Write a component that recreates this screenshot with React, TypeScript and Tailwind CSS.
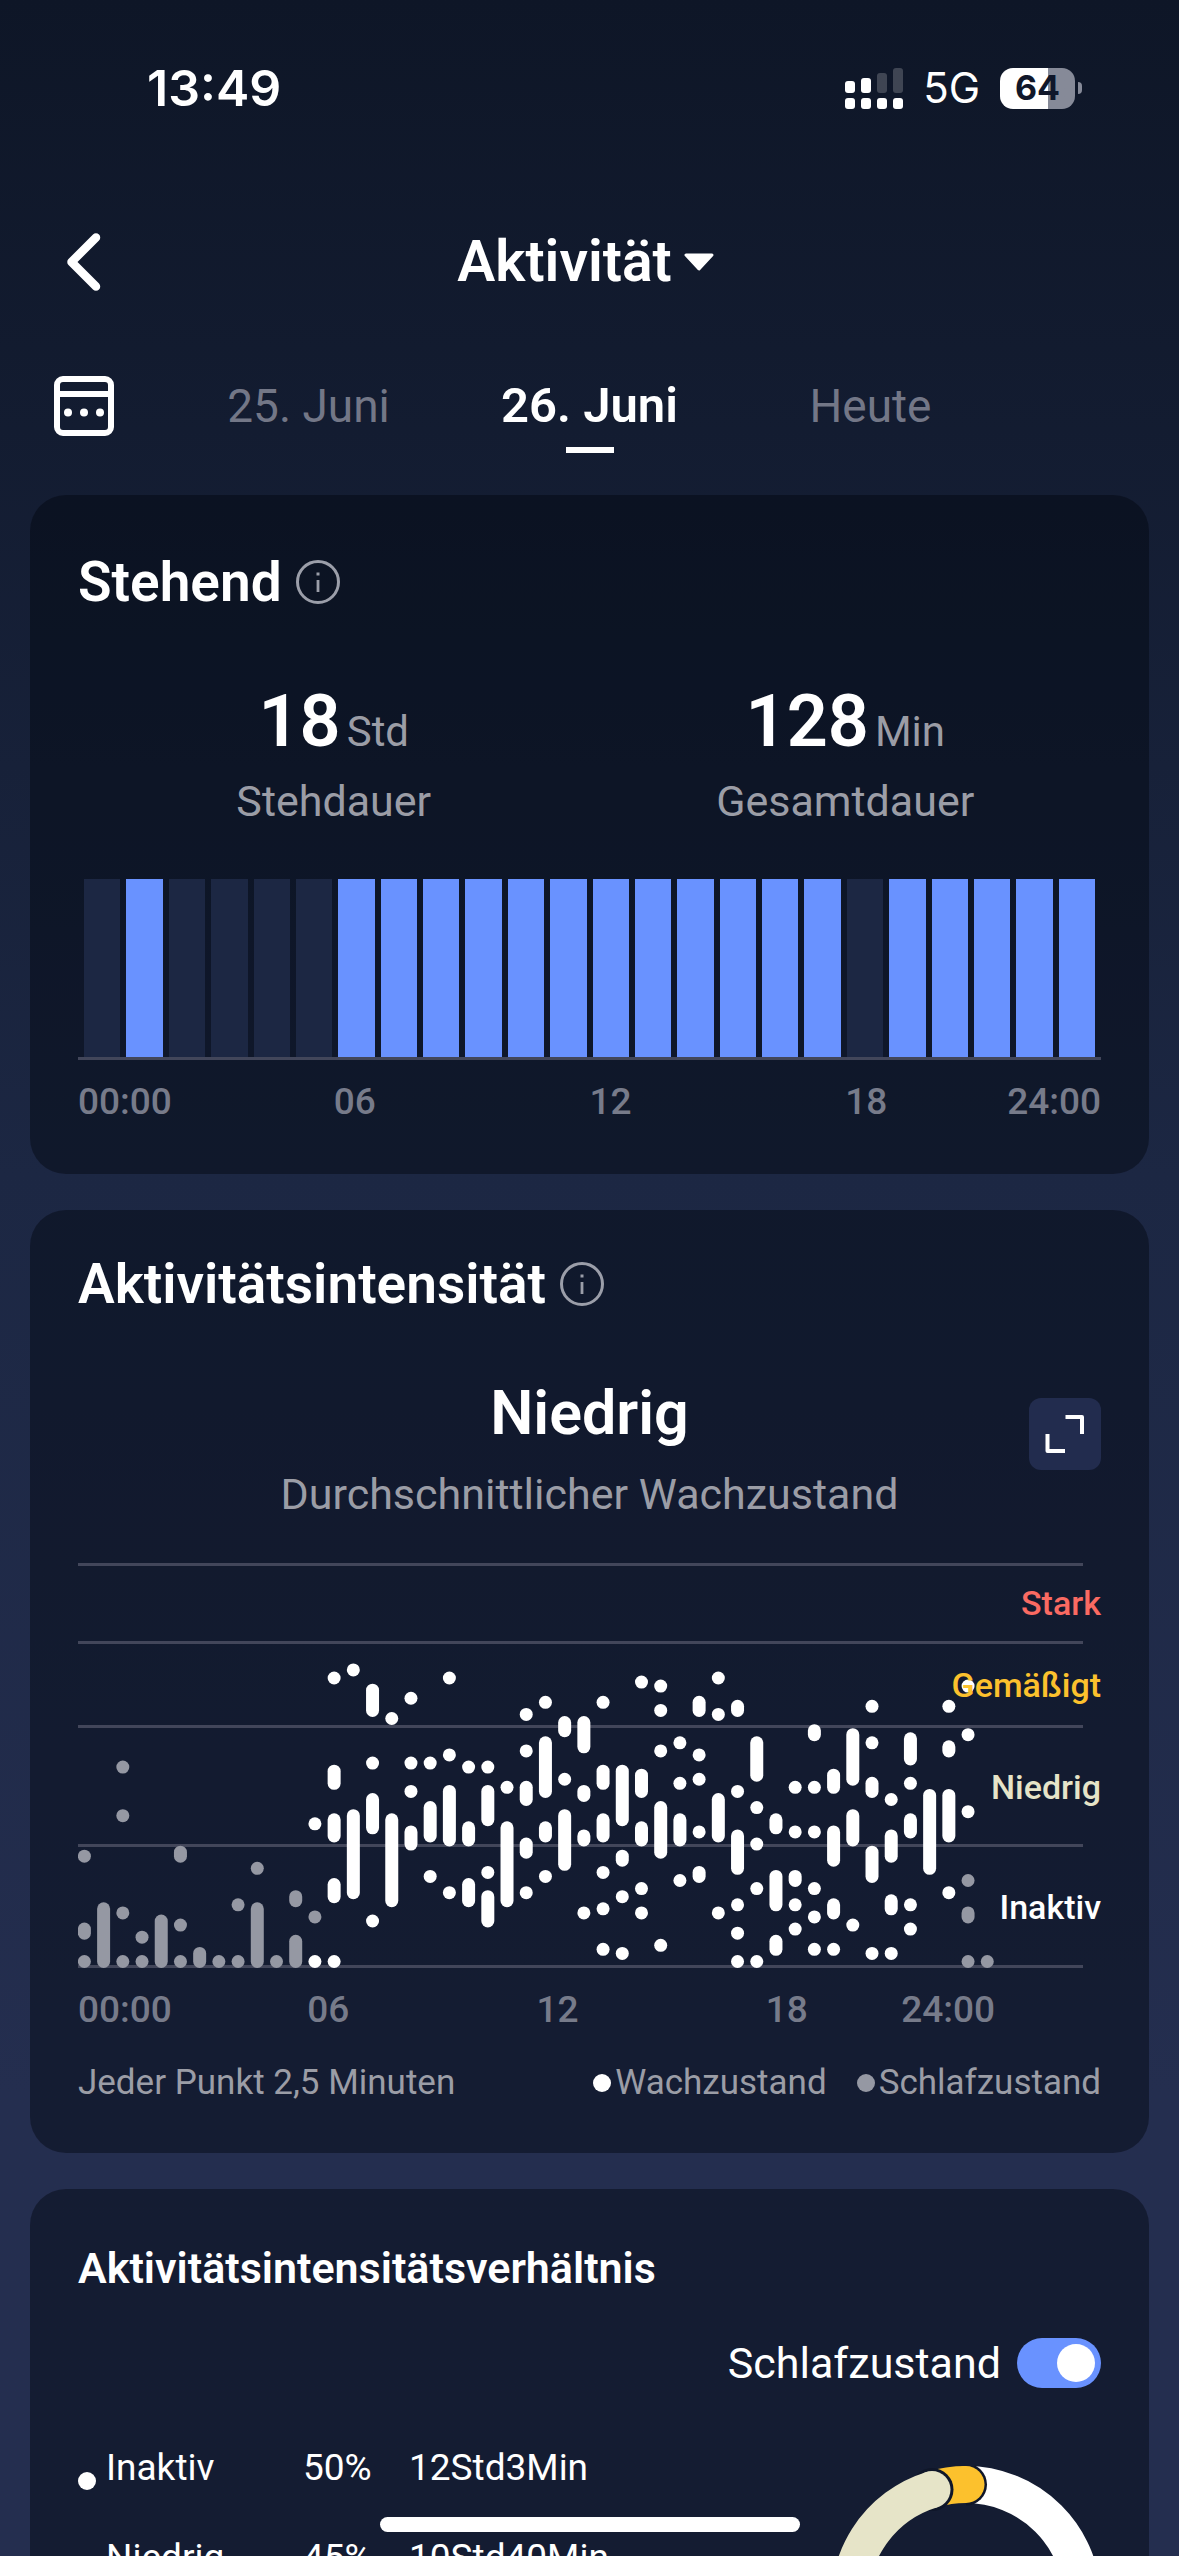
import React, { useState } from 'react';
import clsx from 'clsx';

// One run of stacked points: [column, lowest level, highest level]
type Run = [number, number, number];

const STANDING = [0, 1, 0, 0, 0, 0, 1, 1, 1, 1, 1, 1, 1, 1, 1, 1, 1, 1, 0, 1, 1, 1, 1, 1];

const SLEEP: Run[] = [
    [0, 26, 26], [0, 7, 8], [0, 0, 0],
    [1, 0, 13],
    [2, 48, 48], [2, 36, 36], [2, 12, 12], [2, 0, 0],
    [3, 6, 6], [3, 0, 0],
    [4, 0, 10],
    [5, 26, 27], [5, 9, 9], [5, 0, 0],
    [6, 0, 2],
    [7, 0, 0],
    [8, 14, 14], [8, 0, 0],
    [9, 23, 23], [9, 0, 13],
    [10, 0, 0],
    [11, 15, 16], [11, 0, 5],
    [12, 11, 11],
    [46, 20, 20], [46, 11, 12], [46, 0, 0],
    [47, 0, 0],
];

const AWAKE: Run[] = [
    [12, 34, 34], [12, 0, 0],
    [13, 70, 70], [13, 44, 47], [13, 31, 35], [13, 16, 19], [13, 0, 0],
    [14, 72, 72], [14, 17, 36],
    [15, 62, 67], [15, 49, 49], [15, 33, 40], [15, 10, 10],
    [16, 60, 60], [16, 15, 35],
    [17, 65, 65], [17, 49, 49], [17, 42, 42], [17, 29, 32],
    [18, 49, 49], [18, 31, 38], [18, 21, 21],
    [19, 70, 70], [19, 51, 51], [19, 30, 42], [19, 17, 17],
    [20, 48, 48], [20, 30, 33], [20, 15, 19],
    [21, 48, 48], [21, 35, 42], [21, 22, 22], [21, 10, 16],
    [22, 43, 43], [22, 15, 33],
    [23, 61, 61], [23, 52, 52], [23, 40, 43], [23, 27, 29], [23, 17, 17],
    [24, 64, 64], [24, 42, 54], [24, 31, 33], [24, 21, 21],
    [25, 57, 59], [25, 45, 45], [25, 24, 36],
    [26, 53, 59], [26, 41, 42], [26, 30, 31], [26, 12, 12],
    [27, 64, 64], [27, 44, 47], [27, 31, 35], [27, 22, 22], [27, 13, 13], [27, 3, 3],
    [28, 35, 47], [28, 25, 26], [28, 16, 16], [28, 2, 2],
    [29, 69, 69], [29, 42, 46], [29, 30, 33], [29, 18, 18], [29, 12, 12],
    [30, 68, 68], [30, 62, 62], [30, 52, 52], [30, 27, 38], [30, 4, 4],
    [31, 54, 54], [31, 44, 44], [31, 30, 35], [31, 20, 20],
    [32, 62, 64], [32, 51, 51], [32, 45, 45], [32, 32, 32], [32, 21, 22],
    [33, 70, 70], [33, 61, 61], [33, 31, 40], [33, 12, 12],
    [34, 62, 63], [34, 42, 42], [34, 23, 31], [34, 14, 14], [34, 7, 7], [34, 0, 0],
    [35, 46, 54], [35, 38, 38], [35, 29, 29], [35, 18, 18], [35, 0, 0],
    [36, 33, 35], [36, 14, 21], [36, 3, 5],
    [37, 43, 43], [37, 32, 32], [37, 20, 21], [37, 14, 14], [37, 8, 8],
    [38, 56, 57], [38, 43, 43], [38, 32, 32], [38, 18, 18], [38, 11, 11], [38, 3, 3],
    [39, 43, 46], [39, 25, 32], [39, 12, 14], [39, 3, 3],
    [40, 45, 56], [40, 30, 36], [40, 9, 9],
    [41, 63, 63], [41, 54, 54], [41, 42, 44], [41, 21, 27], [41, 2, 2],
    [42, 40, 40], [42, 26, 31], [42, 13, 15], [42, 2, 2],
    [43, 50, 55], [43, 44, 44], [43, 32, 35], [43, 14, 14], [43, 8, 8],
    [44, 23, 41],
    [45, 63, 63], [45, 52, 53], [45, 31, 41], [45, 17, 17],
    [46, 68, 68], [46, 56, 56], [46, 37, 37],
];

const DAYS = ['25. Juni', '26. Juni', 'Heute'];

const RATIO = [
    { label: 'Inaktiv', share: '50%', time: '12Std3Min', dot: 'bg-white' },
    { label: 'Niedrig', share: '45%', time: '10Std40Min', dot: 'bg-[#e6e4c8]' },
];

const StatusBar = () => (
    <div className="flex h-44 shrink-0 items-center justify-between pl-[147px] pr-[97px] font-[Inter]">
        <span className="text-[50px] leading-none font-semibold">13:49</span>
        <div className="flex items-center gap-5">
            <svg width="58" height="41" viewBox="0 0 58 41" fill="#fff" aria-hidden="true">
                <rect x="0" y="13" width="10" height="12" rx="3" />
                <rect x="16" y="10" width="10" height="15" rx="3" />
                <rect x="32" y="5" width="10" height="20" rx="3" opacity=".2" />
                <rect x="48" y="0" width="10" height="25" rx="3" opacity=".2" />
                <rect x="0" y="30" width="10" height="11" rx="3" />
                <rect x="16" y="30" width="10" height="11" rx="3" />
                <rect x="32" y="30" width="10" height="11" rx="3" />
                <rect x="48" y="30" width="10" height="11" rx="3" />
            </svg>
            <span className="text-[42px] leading-none">5G</span>
            <div className="flex items-center gap-[3px]">
                <div className="flex h-[41px] w-[75px] items-center justify-center rounded-[13px] bg-linear-to-r from-white from-64% to-[#868a98] to-64% text-[34px] leading-none font-bold text-[#10172a]">
                    64
                </div>
                <div className="h-3 w-1 rounded-r-full bg-[#868a98]" />
            </div>
        </div>
    </div>
);

const InfoButton = ({ topic }: { topic: string }) => (
    <button type="button" aria-label={`Info ${topic}`}>
        <svg width="44" height="44" viewBox="0 0 44 44" fill="none" stroke="#9b9ea9" aria-hidden="true">
            <circle cx="22" cy="22" r="20.5" strokeWidth="3" />
            <path d="M22 20v12" strokeWidth="2.8" />
            <path d="M22 12.5v3" strokeWidth="3" />
        </svg>
    </button>
);

const CardTitle = ({ title }: { title: string }) => (
    <div className="flex h-16 items-center gap-3.5">
        <h2 className="text-[55px] leading-16 font-semibold">{title}</h2>
        <InfoButton topic={title} />
    </div>
);

const Stat = ({ value, unit, label }: { value: string; unit: string; label: string }) => (
    <div className="text-center">
        <div className="text-[72px] leading-[84px] font-semibold">
            {value}
            <span className="ml-1.5 text-[42px] leading-none font-normal text-[#9b9da6]">{unit}</span>
        </div>
        <div className="mt-3 text-[43px] leading-[50px] text-[#9b9da6]">{label}</div>
    </div>
);

const HourAxis = () => (
    <div className="grid grid-cols-4 text-[37px] leading-11 font-medium text-[#777b8a]">
        <span>00:00</span>
        <span>06</span>
        <span>12</span>
        <span className="flex justify-between">
            <span>18</span>
            <span>24:00</span>
        </span>
    </div>
);

const Runs = ({ runs, color }: { runs: Run[]; color: string }) => (
    <g fill={color}>
        {runs.map(([col, low, high]) => (
            <rect
                key={`${col}-${low}`}
                x={col * 19.21 - 0.1}
                y={392 - high * 4.05}
                width="13"
                height={13 + (high - low) * 4.05}
                rx="6.5"
            />
        ))}
    </g>
);

const IntensityChart = () => (
    <div className="mt-11 grid">
        <svg viewBox="0 0 1023 405" className="col-start-1 row-start-1 w-full" aria-hidden="true">
            <g fill="#42465a">
                <rect y="0" width="1005" height="3" />
                <rect y="78" width="1005" height="3" />
                <rect y="162" width="1005" height="3" />
                <rect y="281" width="1005" height="3" />
                <rect y="402" width="1005" height="3" />
            </g>
            <Runs runs={SLEEP} color="#9598a3" />
            <Runs runs={AWAKE} color="#fff" />
        </svg>
        <div className="z-10 col-start-1 row-start-1 grid grid-rows-[80fr_84fr_119fr_122fr] items-center text-right text-[34px] leading-10 font-medium">
            <span className="text-[#fa6a62]">Stark</span>
            <span className="text-[#fcc12d]">Gemäßigt</span>
            <span className="text-[#e6e4c8]">Niedrig</span>
            <span>Inaktiv</span>
        </div>
    </div>
);

const RatioRing = () => (
    <svg width="270" height="270" viewBox="0 0 270 270" fill="none" strokeWidth="37" className="mt-5" aria-hidden="true">
        {/* inactive, right half */}
        <path d="M135 18.5A116.5 116.5 0 0 1 135 251.5" stroke="#fff" />
        {/* moderate, laid over the start of the white half */}
        <path d="M100.9 23.6A116.5 116.5 0 0 1 135 18.5" stroke="#fcc12d" />
        <path d="M135 -2.5A21 21 0 0 1 135 39.5" fill="#0f1629" stroke="none" />
        <circle cx="135" cy="18.5" r="18.5" fill="#fcc12d" stroke="none" />
        {/* low */}
        <circle cx="101" cy="23.6" r="21.5" fill="#0f1629" stroke="none" />
        <path d="M135 251.5A116.5 116.5 0 0 1 101 23.6" stroke="#e6e4c8" />
        <circle cx="101" cy="23.6" r="18.5" fill="#e6e4c8" stroke="none" />
    </svg>
);

const Card = ({ className, children }: { className: string; children: React.ReactNode }) => (
    <section className={clsx('rounded-[36px] bg-[#00040c]/42 px-12', className)}>{children}</section>
);

export default function App() {
    const [day, setDay] = useState('26. Juni');
    const [showSleep, setShowSleep] = useState(true);

    return (
        <div className="relative flex h-screen flex-col overflow-hidden bg-linear-to-b from-[#0e1627] via-[#1c2743] via-46% to-[#242e4f] to-82% font-[Roboto,sans-serif] text-white">
            <StatusBar />

            <header className="grid h-[172px] shrink-0 grid-cols-[1fr_auto_1fr] items-center px-[54px]">
                <button type="button" aria-label="Zurück" className="justify-self-start p-3">
                    <svg width="36" height="60" viewBox="0 0 36 60" fill="none" stroke="#fff" strokeWidth="8.5" strokeLinecap="round" strokeLinejoin="round">
                        <path d="M30 5.5 5.5 30 30 54.5" />
                    </svg>
                </button>
                <button type="button" className="flex items-center gap-3 pr-2 text-[57px] leading-16 font-semibold">
                    <h1>Aktivität</h1>
                    <svg width="30" height="18" viewBox="0 0 30 18" fill="#fff" stroke="#fff" strokeWidth="3" strokeLinejoin="round" aria-hidden="true">
                        <path d="M2 2h26L15 16z" />
                    </svg>
                </button>
            </header>

            <nav className="grid h-[147px] shrink-0 grid-cols-[138px_1fr_138px] px-[30px] pt-[26px]">
                <button type="button" aria-label="Kalender" className="h-16 pl-6">
                    <svg width="60" height="60" viewBox="0 0 60 60" fill="none" stroke="#fff" strokeWidth="6" aria-hidden="true">
                        <rect x="3" y="3" width="54" height="54" rx="6" />
                        <path d="M3 18h54" />
                        <g fill="#fff" stroke="none">
                            <circle cx="14" cy="36.5" r="4" />
                            <circle cx="30" cy="36.5" r="4" />
                            <circle cx="46" cy="36.5" r="4" />
                        </g>
                    </svg>
                </button>
                <div className="grid grid-cols-3 items-start">
                    {DAYS.map((d) => (
                        <button
                            key={d}
                            type="button"
                            onClick={() => setDay(d)}
                            className={clsx(
                                'flex flex-col items-center gap-[9px] leading-16',
                                d === day ? 'text-[49px] font-semibold' : 'text-[46px] text-[#737787]'
                            )}
                        >
                            {d}
                            {d === day && <span className="h-1.5 w-12 bg-white" />}
                        </button>
                    ))}
                </div>
            </nav>

            <main className="flex min-h-0 flex-1 flex-col gap-9 overflow-y-auto px-[30px] [scrollbar-width:none] *:shrink-0">
                <Card className="pt-[55px] pb-[50px]">
                    <CardTitle title="Stehend" />
                    <div className="mt-[66px] grid grid-cols-2">
                        <Stat value="18" unit="Std" label="Stehdauer" />
                        <Stat value="128" unit="Min" label="Gesamtdauer" />
                    </div>
                    <div className="mt-[53px] mb-5 flex h-[181px] gap-1.5 border-b-[3px] border-[#42465a] px-1.5">
                        {STANDING.map((on, hour) => (
                            <div key={hour} className={clsx('flex-1', on ? 'bg-[#6992ff]' : 'bg-[#1c2743]')} />
                        ))}
                    </div>
                    <HourAxis />
                </Card>

                <Card className="pt-[42px] pb-12">
                    <CardTitle title="Aktivitätsintensität" />
                    <div className="mt-[61px] grid grid-cols-[72px_1fr_72px] items-center text-center">
                        <div className="col-start-2">
                            <div className="text-[61px] leading-[72px] font-semibold">Niedrig</div>
                            <div className="mt-5 text-[43px] leading-[50px] text-[#9b9da6]">Durchschnittlicher Wachzustand</div>
                        </div>
                        <button type="button" aria-label="Vergrößern" className="mb-7 flex size-18 items-center justify-center rounded-xl bg-[#222c4e]">
                            <svg width="40" height="40" viewBox="0 0 40 40" fill="none" stroke="#fff" strokeWidth="4" strokeLinejoin="round" aria-hidden="true">
                                <path d="M20.5 3H37V20" />
                                <path d="M2.5 20V37H20" />
                            </svg>
                        </button>
                    </div>
                    <IntensityChart />
                    <div className="mt-5 pr-[106px]">
                        <HourAxis />
                    </div>
                    <div className="mt-[29px] flex items-center text-[35px] leading-11 text-[#9b9da6]">
                        <span className="mr-auto">Jeder Punkt 2,5 Minuten</span>
                        <span className="mr-[30px] flex items-center gap-1">
                            <span className="size-[18px] rounded-full bg-white" />
                            Wachzustand
                        </span>
                        <span className="flex items-center gap-1">
                            <span className="size-[18px] rounded-full bg-[#9598a3]" />
                            Schlafzustand
                        </span>
                    </div>
                </Card>

                <Card className="pt-[54px] pb-12">
                    <h2 className="text-[43px] leading-[50px] font-semibold">Aktivitätsintensitätsverhältnis</h2>
                    <label className="mt-[45px] flex items-center justify-end gap-4 text-[43px] leading-[50px]">
                        Schlafzustand
                        <input
                            type="checkbox"
                            role="switch"
                            checked={showSleep}
                            onChange={(e) => setShowSleep(e.target.checked)}
                            className="flex h-[50px] w-[84px] appearance-none items-center rounded-full bg-gray-600 px-1.5 before:size-[38px] before:rounded-full before:bg-white checked:justify-end checked:bg-[#6992ff]"
                        />
                    </label>
                    <div className="mt-[58px] flex items-start justify-between">
                        <ul className="flex flex-col gap-[46px] text-[37px] leading-11">
                            {RATIO.map((r) => (
                                <li key={r.label} className="grid grid-cols-[18px_187px_96px_auto] items-end gap-2.5">
                                    <span className={clsx('size-[18px] rounded-full', r.dot)} />
                                    <span>{r.label}</span>
                                    <span>{r.share}</span>
                                    <span>{r.time}</span>
                                </li>
                            ))}
                        </ul>
                        <RatioRing />
                    </div>
                </Card>
            </main>

            {/* Home indicator */}
            <div className="absolute bottom-6 left-1/2 h-[15px] w-[420px] -translate-x-1/2 rounded-full bg-white" />
        </div>
    );
}
